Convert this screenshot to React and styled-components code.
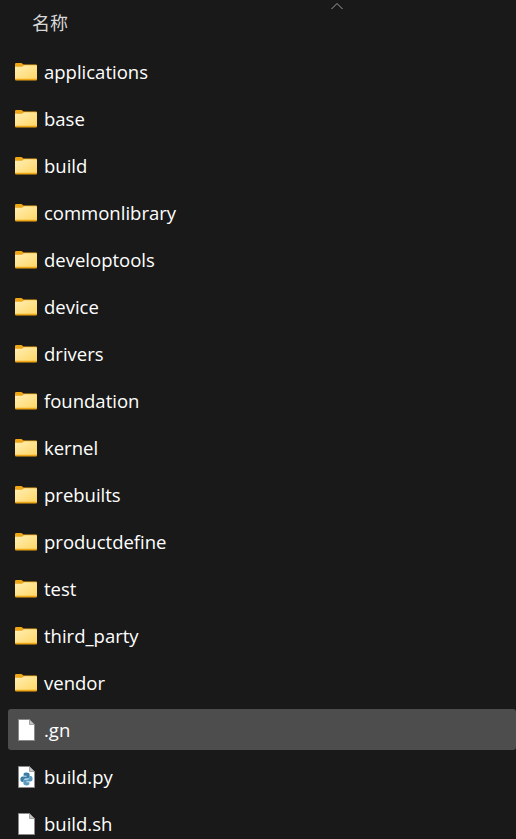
import React from "react";
import styled, { createGlobalStyle } from "styled-components";

const Global = createGlobalStyle`
  html, body { margin: 0; padding: 0; background: #191919; }
  body { width: 516px; height: 839px; overflow: hidden; }
`;

const Page = styled.div`
  width: 516px;
  height: 839px;
  overflow: hidden;
  background: #191919;
  font-family: "Open Sans", "Noto Sans CJK SC", sans-serif;
  color: #fff;
`;

const Header = styled.div`
  position: relative;
  height: 51px;
  box-sizing: border-box;
  padding: 10px 0 0 32px;
  font-size: 18px;
  line-height: 24px;
  color: #d8d8d8;
  font-family: "Noto Sans CJK SC", sans-serif;
`;

const SortCaret = styled.svg`
  position: absolute;
  left: 330px;
  top: 2px;
  width: 14px;
  height: 8px;
`;

const List = styled.div`
  display: flex;
  flex-direction: column;
  gap: 6px;
  padding-left: 8px;
`;

const Row = styled.div`
  display: flex;
  align-items: center;
  height: 41px;
  flex: none;
  padding-left: 7px;
  border-radius: 3px;
  background: ${(p) => (p.$selected ? "#4d4d4d" : "transparent")};
`;

const IconSlot = styled.div`
  width: 22px;
  height: 22px;
  flex: none;
  display: flex;
  align-items: center;
  justify-content: center;
  margin-right: 7px;
`;

const Name = styled.span`
  font-size: 18.5px;
  line-height: 24px;
  color: #fff;
  white-space: nowrap;
`;

const FolderIcon = () => (
  <svg width="22" height="18" viewBox="0 0 22 18">
    <defs>
      <linearGradient id="fold" x1="0" y1="0" x2="1" y2="1">
        <stop offset="0" stopColor="#ffeeb4" />
        <stop offset="1" stopColor="#ffd766" />
      </linearGradient>
    </defs>
    <path d="M0 1.2Q0 0 1.2 0H6.5L8.5 1.6H21Q22 1.6 22 2.6V16.5Q22 17.5 21 17.5H1Q0 17.5 0 16.5Z" fill="#eea516" />
    <path d="M0 3.8H7L9 2.2H21Q22 2.2 22 3.2V15.8H0Z" fill="url(#fold)" />
  </svg>
);

const FileShape = ({ children }) => (
  <svg width="17" height="22" viewBox="0 0 17 22">
    <path d="M.5.5H11.5L16.5 5.5V21.5H.5Z" fill="#fff" stroke="#8a8a8a" />
    <path d="M11.5.5V5.5H16.5Z" fill="#c4c4c4" stroke="#8a8a8a" strokeWidth=".7" />
    {children}
  </svg>
);

const PythonMark = () => (
  <g>
    <path d="M8.4 6.5C5.8 6.5 5.6 7.5 5.6 8.4V9.8H8.6V10.4H4.4C3.2 10.4 2.4 11.5 2.4 13.2 2.4 14.9 3.2 16 4.4 16H5.6V14.4C5.6 13.2 6.6 12.4 7.6 12.4H10.2C11 12.4 11.6 11.7 11.6 10.9V8.4C11.6 7.3 10.6 6.5 8.4 6.5Z" fill="#3a7ca5" />
    <path d="M8.6 19.5C11.2 19.5 11.4 18.5 11.4 17.6V16.2H8.4V15.6H12.6C13.8 15.6 14.6 14.5 14.6 12.8 14.6 11.1 13.8 10 12.6 10H11.4V11.6C11.4 12.8 10.4 13.6 9.4 13.6H6.8C6 13.6 5.4 14.3 5.4 15.1V17.6C5.4 18.7 6.4 19.5 8.6 19.5Z" fill="#5a9bc0" />
  </g>
);

const items = [
  ["applications"], ["base"], ["build"], ["commonlibrary"], ["developtools"],
  ["device"], ["drivers"], ["foundation"], ["kernel"], ["prebuilts"],
  ["productdefine"], ["test"], ["third_party"], ["vendor"],
  [".gn", "file", true], ["build.py", "py"], ["build.sh", "file"],
];

export default function App() {
  return (
    <Page>
      <Global />
      <Header>
        名称
        <SortCaret viewBox="0 0 14 8">
          <path d="M1.5 7L7 1.5 12.5 7" fill="none" stroke="#a0a0a0" strokeWidth="1" />
        </SortCaret>
      </Header>
      <List>
        {items.map(([name, kind, selected]) => (
          <Row key={name} $selected={selected}>
            <IconSlot>
              {kind === "file" ? <FileShape /> : kind === "py" ? <FileShape><PythonMark /></FileShape> : <FolderIcon />}
            </IconSlot>
            <Name>{name}</Name>
          </Row>
        ))}
      </List>
    </Page>
  );
}
